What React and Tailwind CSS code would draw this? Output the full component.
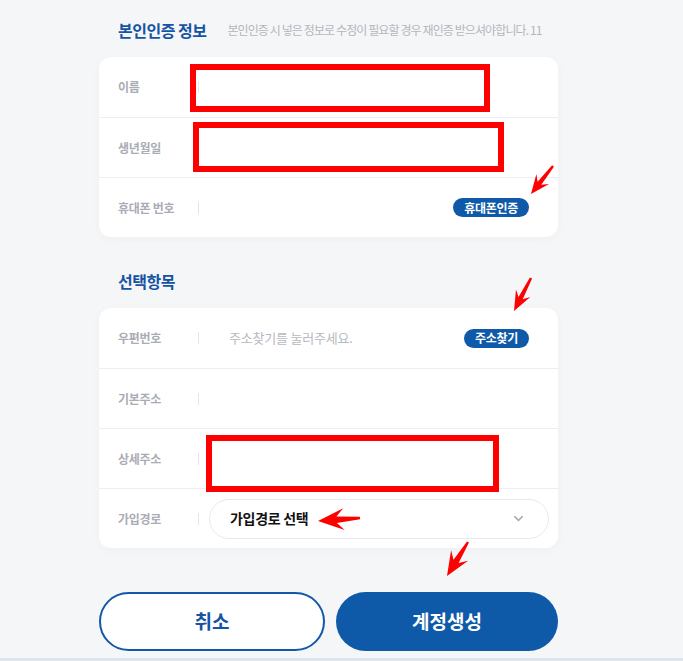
import { ChevronDown } from 'lucide-react';

const font = { fontFamily: '"Noto Sans CJK KR", "Noto Sans", sans-serif' };

// red annotation arrow: tip (tx,ty), tail (sx,sy)
function arrowPoints(tx, ty, sx, sy, h, w) {
  const len = Math.hypot(tx - sx, ty - sy);
  const dx = (tx - sx) / len;
  const dy = (ty - sy) / len;
  const nx = -dy;
  const ny = dx;
  const p = (x, y) => `${x.toFixed(1)},${y.toFixed(1)}`;
  return [
    p(tx, ty),
    p(tx - dx * h + nx * w, ty - dy * h + ny * w),
    p(tx - dx * h * 0.72 + nx * w * 0.3, ty - dy * h * 0.72 + ny * w * 0.3),
    p(sx + nx * 1.2, sy + ny * 1.2),
    p(sx - nx * 1.2, sy - ny * 1.2),
    p(tx - dx * h * 0.72 - nx * w * 0.3, ty - dy * h * 0.72 - ny * w * 0.3),
    p(tx - dx * h - nx * w, ty - dy * h - ny * w),
  ].join(' ');
}

const arrows = [
  [531, 194, 553, 166, 19, 8],
  [514, 311, 531, 278, 20, 8],
  [318, 521, 360, 518, 26, 11],
  [447, 576, 468, 542, 24, 10],
];

function Row({ label, children, first }) {
  return (
    <div className={`flex items-center h-[60px] pl-[19px] pr-[9px] ${first ? '' : 'border-t border-[#eceef1]'}`}>
      <span className="w-[80px] text-[12px] font-bold text-[#a9acb4] tracking-[-0.3px]">{label}</span>
      <span className="w-px h-3 bg-[#e3e5e9]" />
      <div className="flex-1 flex items-center pl-[10px]">{children}</div>
    </div>
  );
}

function Pill({ children }) {
  return (
    <button className="ml-auto mr-[20px] h-[19px] px-[11px] rounded-full bg-[#0f5aa8] text-white text-[12px] font-bold leading-none tracking-[-0.3px]">
      {children}
    </button>
  );
}

export default function App() {
  return (
    <div className="relative w-[683px] h-[661px] overflow-hidden bg-[#f5f6f8]" style={font}>
      <div className="ml-[99px] w-[459px] pt-[19px]">
        <div className="flex items-center h-[22px] pl-[19px]">
          <h2 className="text-[16px] font-bold text-[#1553a3] tracking-[-0.5px]">본인인증 정보</h2>
          <p className="ml-[21px] text-[12px] text-[#b3b6bd] tracking-[-0.9px]">
            본인인증 시 넣은 정보로 수정이 필요할 경우 재인증 받으셔야합니다. 11
          </p>
        </div>
        <div className="mt-[16px] bg-white rounded-xl shadow-[0_2px_10px_rgba(0,0,0,0.03)]">
          <Row label="이름" first />
          <Row label="생년월일" />
          <Row label="휴대폰 번호">
            <Pill>휴대폰인증</Pill>
          </Row>
        </div>

        <div className="mt-[33px] flex items-center h-[22px] pl-[19px]">
          <h2 className="text-[16px] font-bold text-[#1553a3] tracking-[-0.5px]">선택항목</h2>
        </div>
        <div className="mt-[16px] bg-white rounded-xl shadow-[0_2px_10px_rgba(0,0,0,0.03)]">
          <Row label="우편번호" first>
            <span className="pl-[20px] text-[13px] text-[#b6b9c0] tracking-[-0.2px]">주소찾기를 눌러주세요.</span>
            <Pill>주소찾기</Pill>
          </Row>
          <Row label="기본주소" />
          <Row label="상세주소" />
          <Row label="가입경로">
            <div className="flex-1 flex items-center h-[40px] pl-[20px] pr-[22px] rounded-full border border-[#e8eaee]">
              <span className="text-[14px] font-bold text-[#111] tracking-[-0.3px]">가입경로 선택</span>
              <ChevronDown className="ml-auto text-[#a9acb4]" size={15} strokeWidth={2.5} />
            </div>
          </Row>
        </div>

        <div className="mt-[44px] flex gap-[11px]">
          <button className="flex-1 h-[59px] rounded-full border-2 border-[#1159a8] bg-white text-[19px] font-bold text-[#1553a3]">
            취소
          </button>
          <button className="flex-1 h-[59px] rounded-full bg-[#0f5aa8] text-[19px] font-bold text-white">
            계정생성
          </button>
        </div>
      </div>
      <div className="absolute left-0 right-0 bottom-0 h-[3px] bg-[#dfe5ec]" />

      {/* annotation boxes */}
      <div className="absolute left-[190px] top-[64px] w-[300px] h-[48px] border-[6px] border-[#ff0000]" />
      <div className="absolute left-[193px] top-[122px] w-[311px] h-[50px] border-[6px] border-[#ff0000]" />
      <div className="absolute left-[206px] top-[435px] w-[293px] h-[57px] border-[6px] border-[#ff0000]" />

      <svg className="absolute inset-0 pointer-events-none" width="683" height="661">
        {arrows.map((a, i) => (
          <polygon key={i} points={arrowPoints(...a)} fill="#ff0000" />
        ))}
      </svg>
    </div>
  );
}
